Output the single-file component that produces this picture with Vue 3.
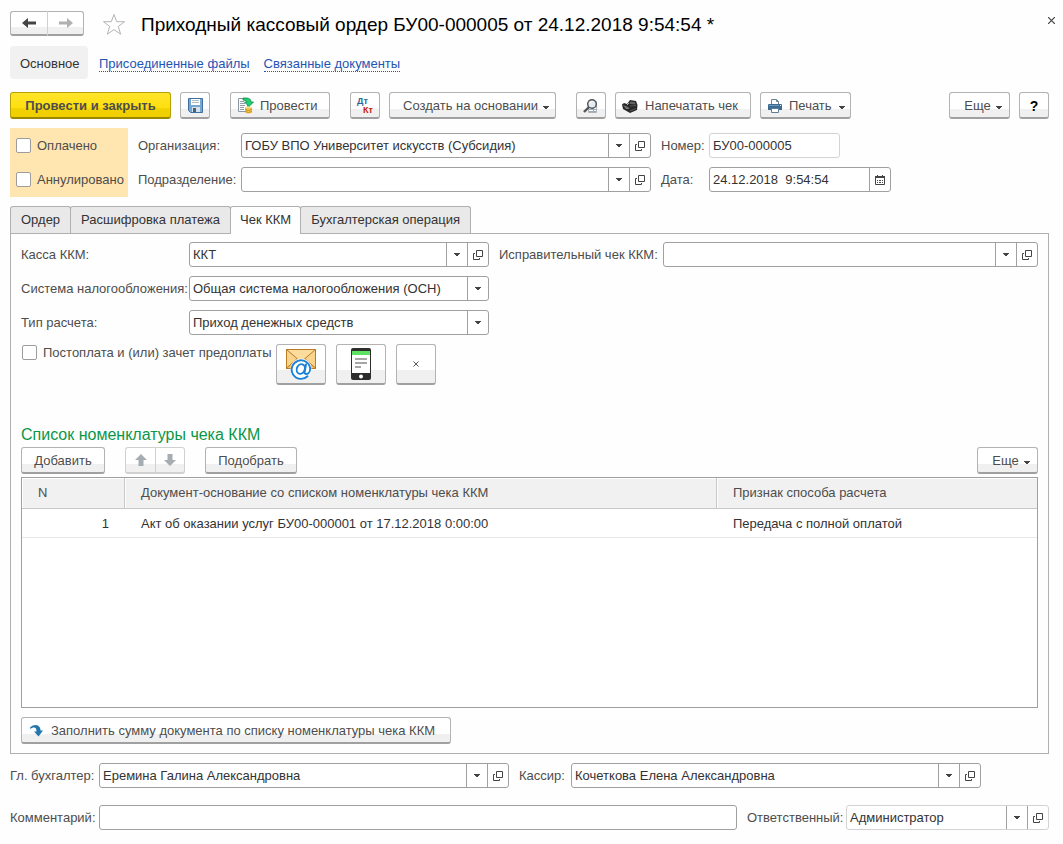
<script setup>
import { ref } from 'vue'

const tabs = ['Ордер', 'Расшифровка платежа', 'Чек ККМ', 'Бухгалтерская операция']
const activeTab = ref('Чек ККМ')

const paid = ref(false)
const cancelled = ref(false)
const postpaid = ref(false)

const organization = ref('ГОБУ ВПО Университет искусств (Субсидия)')
const department = ref('')
const number = ref('БУ00-000005')
const date = ref('24.12.2018  9:54:54')
const cashRegister = ref('ККТ')
const correctionReceipt = ref('')
const taxSystem = ref('Общая система налогообложения (ОСН)')
const paymentType = ref('Приход денежных средств')
const accountant = ref('Еремина Галина Александровна')
const cashier = ref('Кочеткова Елена Александровна')
const comment = ref('')
const responsible = ref('Администратор')

const rows = [
  {
    n: 1,
    document: 'Акт об оказании услуг БУ00-000001 от 17.12.2018 0:00:00',
    method: 'Передача с полной оплатой',
  },
]
</script>

<template>
  <svg class="sprite" width="0" height="0" aria-hidden="true">
    <symbol id="i-caret" viewBox="0 0 6 3"><path d="M0 0h6v1H5v1H4v1H2V2H1V1H0z" fill="#444" /></symbol>
    <symbol id="i-open" viewBox="0 0 10 10">
      <path d="M3.500 .5h6v6h-6z M2 3.500H.5v6h6V8" fill="none" stroke="#444" />
    </symbol>
  </svg>

  <main class="page">
    <header class="header">
      <div class="pair">
        <button class="btn" aria-label="Назад">
          <svg width="14" height="12" viewBox="0 0 14 12"><path d="M0 6l6-5v3.500h8v3H6V11z" fill="#444" /></svg>
        </button>
        <button class="btn" aria-label="Вперед">
          <svg width="14" height="12" viewBox="0 0 14 12"><path d="M14 6L8 1v3.500H0v3h8V11z" fill="#b0b0b0" /></svg>
        </button>
      </div>
      <button class="star" aria-label="Избранное">
        <svg width="24" height="23" viewBox="0 0 24 23">
          <path d="M12 1.500l2.700 7.200h7.800l-6.200 4.700 2.300 7.800L12 16.600l-6.600 4.600 2.300-7.800-6.200-4.700h7.800z" fill="#fff" stroke="#b4b4b4" />
        </svg>
      </button>
      <h1>Приходный кассовый ордер БУ00-000005 от 24.12.2018 9:54:54 *</h1>
      <button class="close" aria-label="Закрыть">
        <svg width="7" height="7" viewBox="0 0 7 7"><path d="M0 0l7 7M7 0L0 7" stroke="#444" stroke-width="1.200" /></svg>
      </button>
    </header>

    <nav class="nav">
      <span class="current">Основное</span>
      <a href="#files">Присоединенные файлы</a>
      <a href="#related">Связанные документы</a>
    </nav>

    <div class="toolbar">
      <div class="group">
        <button class="btn primary">Провести и закрыть</button>
        <button class="btn square" aria-label="Записать">
          <svg width="15" height="15" viewBox="0 0 15 15">
            <path d="M.5 .5h14v14h-12l-2-2z" fill="#78a7d2" stroke="#3f6f9f" />
            <path d="M3 1h9v6H3z" fill="#fff" />
            <path d="M4 2.500h7M4 4.500h7" stroke="#b5bec6" />
            <path d="M4 9h8v5H4z" fill="#d6e1e9" />
            <path d="M5 10h3v4H5z" fill="#42617c" />
          </svg>
        </button>
      </div>
      <button class="btn post">
        <svg width="17" height="17" viewBox="0 0 17 17">
          <path d="M1.500 1.500h9v13h-9z" fill="#fafafa" stroke="#8b98a4" />
          <path d="M3 4.500h4M3 6.500h5M3 8.500h5M3 10.500h4M3 12.500h4" stroke="#93a0ab" />
          <path d="M8 10.500h7v5q-3.500 2-7 0z" fill="#f4c64d" />
          <path d="M8 10.500q3.500 2 7 0M8 12.500q3.500 2 7 0M8 14.500q3.500 2 7 0" fill="none" stroke="#c5901c" />
          <ellipse cx="11.500" cy="10.500" rx="3.500" ry="1" fill="#ffe38c" />
          <path d="M6 1h3q5 0 5 4h2.500L12 9.500 7.500 5H10q0-2-4-2z" fill="#1fd070" stroke="#078b46" stroke-width=".8" />
        </svg>
        Провести
      </button>
      <div class="group">
        <button class="btn square dtkt" aria-label="Движения документа">
          <span class="dt">Дт</span><span class="kt">Кт</span>
        </button>
        <button class="btn create">Создать на основании <svg class="caret"><use href="#i-caret" /></svg></button>
      </div>
      <div class="group">
        <button class="btn square" aria-label="Просмотр">
          <svg width="16" height="16" viewBox="0 0 16 16">
            <path d="M7.500 3.500h6v11h-8v-4" fill="#fff" stroke="#a9b4bd" />
            <path d="M6 11.500h7M6 13.500h7M10.500 9v6" stroke="#9aabb9" />
            <circle cx="9" cy="6" r="4.300" fill="#e4edf3" stroke="#555" stroke-width="1.500" />
            <path d="M7 5.500q.5-2 2.500-2" fill="none" stroke="#fff" />
            <path d="M6 9l-5 5" stroke="#555" stroke-width="2.400" />
          </svg>
        </button>
        <button class="btn cheque">
          <svg width="16" height="13" viewBox="0 0 16 13">
            <path d="M0 4.500L2 3l3 1L8 0l6 1 1.500 4-.5 5-7 3-7-4z" fill="#292929" />
            <path d="M1 5l5 2 1.500 2L4 9z" fill="#777" />
            <path d="M8 1.500l5 .8.5 2.200-6-.8z" fill="#666" />
            <path d="M8 6l6-.5M8 11l6-2.500" stroke="#555" />
            <path d="M5 5l2-2" stroke="#bbb" />
          </svg>
          Напечатать чек
        </button>
        <button class="btn print">
          <svg width="14" height="14" viewBox="0 0 14 14">
            <path d="M3.500 6V.5h5l2 2V6" fill="#fff" stroke="#6b8496" />
            <path d="M8.500 .5v2h2" fill="none" stroke="#6b8496" />
            <path d="M1 5h12q1 0 1 1v5H0V6q0-1 1-1z" fill="#3a6c94" />
            <path d="M1 6.500h10" stroke="#6c98ba" /><path d="M12 6.500h1" stroke="#fff" />
            <path d="M3.500 9.500h7v4h-7z" fill="#fff" stroke="#5f7c91" />
          </svg>
          Печать <svg class="caret"><use href="#i-caret" /></svg>
        </button>
      </div>
      <div class="group end">
        <button class="btn more">Еще <svg class="caret"><use href="#i-caret" /></svg></button>
        <button class="btn square help" aria-label="Справка">?</button>
      </div>
    </div>

    <section class="top-form">
      <div class="flags">
        <label><input v-model="paid" type="checkbox" />Оплачено</label>
        <label><input v-model="cancelled" type="checkbox" />Аннулировано</label>
      </div>
      <div class="top-grid">
        <label for="org">Организация:</label>
        <div class="field">
          <input id="org" v-model="organization" />
          <button aria-label="Выбрать организацию"><svg class="caret"><use href="#i-caret" /></svg></button>
          <button aria-label="Открыть организацию"><svg class="open"><use href="#i-open" /></svg></button>
        </div>
        <label for="num">Номер:</label>
        <div class="field pale number"><input id="num" v-model="number" /></div>

        <label for="dep">Подразделение:</label>
        <div class="field">
          <input id="dep" v-model="department" />
          <button aria-label="Выбрать подразделение"><svg class="caret"><use href="#i-caret" /></svg></button>
          <button aria-label="Открыть подразделение"><svg class="open"><use href="#i-open" /></svg></button>
        </div>
        <label for="date">Дата:</label>
        <div class="field date">
          <input id="date" v-model="date" />
          <button aria-label="Календарь">
            <svg width="10" height="10" viewBox="0 0 10 10">
              <path d="M.5 1.500h9v8h-9z" fill="#fff" stroke="#444" />
              <path d="M0 2h10" stroke="#444" stroke-width="2" />
              <path d="M2.500 0v2M7.500 0v2" stroke="#444" />
              <path d="M2 5.500h1M4 5.500h2M7 5.500h1M2 7.500h1M4 7.500h2M7 7.500h1" stroke="#444" />
            </svg>
          </button>
        </div>
      </div>
    </section>

    <div class="tabs" role="tablist">
      <button
        v-for="tab in tabs"
        :key="tab"
        role="tab"
        :aria-selected="tab === activeTab"
        :class="{ active: tab === activeTab }"
        @click="activeTab = tab"
      >{{ tab }}</button>
    </div>

    <section class="panel">
      <div class="line">
        <label class="lead" for="kkm">Касса ККМ:</label>
        <div class="field medium">
          <input id="kkm" v-model="cashRegister" />
          <button aria-label="Выбрать кассу"><svg class="caret"><use href="#i-caret" /></svg></button>
          <button aria-label="Открыть кассу"><svg class="open"><use href="#i-open" /></svg></button>
        </div>
        <label class="next" for="fix">Исправительный чек ККМ:</label>
        <div class="field grow">
          <input id="fix" v-model="correctionReceipt" />
          <button aria-label="Выбрать чек"><svg class="caret"><use href="#i-caret" /></svg></button>
          <button aria-label="Открыть чек"><svg class="open"><use href="#i-open" /></svg></button>
        </div>
      </div>
      <div class="line">
        <label class="lead" for="tax">Система налогообложения:</label>
        <div class="field medium choice">
          <select id="tax" v-model="taxSystem"><option>Общая система налогообложения (ОСН)</option></select>
          <span><svg class="caret"><use href="#i-caret" /></svg></span>
        </div>
      </div>
      <div class="line">
        <label class="lead" for="type">Тип расчета:</label>
        <div class="field medium choice">
          <select id="type" v-model="paymentType"><option>Приход денежных средств</option></select>
          <span><svg class="caret"><use href="#i-caret" /></svg></span>
        </div>
      </div>

      <div class="send">
        <label><input v-model="postpaid" type="checkbox" />Постоплата и (или) зачет предоплаты</label>
        <button class="btn big" aria-label="Отправить по почте">
          <svg width="32" height="32" viewBox="0 0 32 32">
            <path d="M1 1h30v20H1z" fill="#f9d48d" />
            <path d="M1 21L12 10h8l11 11z" fill="#f3bd65" />
            <path d="M1.500 1.500h29v19h-29z" fill="none" stroke="#b97a24" />
            <path d="M1 20.500L12 11M31 20.500L20 11" stroke="#b97a24" />
            <path d="M1.500 1.500L16 14 30.500 1.500z" fill="#fbdc9d" stroke="#b97a24" />
            <circle cx="16" cy="21" r="10.500" fill="#fff" />
            <g fill="none" stroke="#1a81d8" stroke-width="1.900" stroke-linecap="round">
              <path d="M22.500 28.200A9.300 9.300 0 1 1 25.200 20.500c0 4-2.500 5.500-4.200 5.500-1.600 0-1.500-1.500-1.200-3l1.200-6.500" />
              <ellipse cx="15.800" cy="21" rx="4" ry="5" transform="rotate(20 15.800 21)" />
            </g>
          </svg>
        </button>
        <button class="btn big" aria-label="Отправить SMS">
          <svg width="20" height="32" viewBox="0 0 20 32">
            <rect width="20" height="32" rx="2" fill="#2d2d2d" />
            <path d="M1 3h18v4H1z" fill="#5ee263" />
            <path d="M1 7h18v18H1z" fill="#fff" />
            <path d="M4 11h12M4 15h12M4 19h6" stroke="#a6a6a6" stroke-width="2" />
            <circle cx="10" cy="28.500" r="2" fill="#fff" />
          </svg>
        </button>
        <button class="btn big small" aria-label="Очистить">
          <svg width="6" height="6" viewBox="0 0 6 6"><path d="M.5 .5l5 5M5.500 .5l-5 5" stroke="#555" /></svg>
        </button>
      </div>

      <h2>Список номенклатуры чека ККМ</h2>
      <div class="commands">
        <button class="btn add">Добавить</button>
        <div class="pair dim">
          <button class="btn" aria-label="Вверх" disabled>
            <svg width="12" height="12" viewBox="0 0 12 12"><path d="M6 0l6 6H8.500v6h-5V6H0z" fill="#a5adb2" /></svg>
          </button>
          <button class="btn" aria-label="Вниз" disabled>
            <svg width="12" height="12" viewBox="0 0 12 12"><path d="M6 12l6-6H8.500V0h-5v6H0z" fill="#a5adb2" /></svg>
          </button>
        </div>
        <button class="btn pick">Подобрать</button>
        <button class="btn more end">Еще <svg class="caret"><use href="#i-caret" /></svg></button>
      </div>

      <div class="table-box">
        <table>
          <colgroup><col class="c-n" /><col class="c-doc" /><col /></colgroup>
          <thead>
            <tr>
              <th>N</th>
              <th>Документ-основание со списком номенклатуры чека ККМ</th>
              <th>Признак способа расчета</th>
            </tr>
          </thead>
          <tbody>
            <tr v-for="row in rows" :key="row.n">
              <td class="num">{{ row.n }}</td>
              <td>{{ row.document }}</td>
              <td>{{ row.method }}</td>
            </tr>
          </tbody>
        </table>
      </div>

      <button class="btn fill">
        <svg width="13" height="12" viewBox="0 0 13 12">
          <path d="M0 2.500Q2 0 5 0q5.500 0 5.500 5.500H13L8.500 11.500 4 6.500h2.500Q6.500 2.500 4 2.500 2 2 .5 4z" fill="#2477ad" />
        </svg>
        Заполнить сумму документа по списку номенклатуры чека ККМ
      </button>
    </section>

    <footer class="footer">
      <div class="line">
        <label class="lead" for="acc">Гл. бухгалтер:</label>
        <div class="field wide">
          <input id="acc" v-model="accountant" />
          <button aria-label="Выбрать бухгалтера"><svg class="caret"><use href="#i-caret" /></svg></button>
          <button aria-label="Открыть бухгалтера"><svg class="open"><use href="#i-open" /></svg></button>
        </div>
        <label class="next cashier-label" for="cashier">Кассир:</label>
        <div class="field wide">
          <input id="cashier" v-model="cashier" />
          <button aria-label="Выбрать кассира"><svg class="caret"><use href="#i-caret" /></svg></button>
          <button aria-label="Открыть кассира"><svg class="open"><use href="#i-open" /></svg></button>
        </div>
      </div>
      <div class="line">
        <label class="lead" for="comment">Комментарий:</label>
        <div class="field grow"><input id="comment" v-model="comment" /></div>
        <label class="next resp-label" for="resp">Ответственный:</label>
        <div class="field pale resp">
          <input id="resp" v-model="responsible" />
          <button aria-label="Выбрать ответственного"><svg class="caret"><use href="#i-caret" /></svg></button>
          <button aria-label="Открыть ответственного"><svg class="open"><use href="#i-open" /></svg></button>
        </div>
      </div>
    </footer>
  </main>
</template>

<style>
body {
  background: #fefefe;
}
</style>

<style scoped>
.sprite {
  position: absolute;
}
.page {
  box-sizing: border-box;
  display: flex;
  flex-direction: column;
  min-height: 100vh;
  padding: 11px 14px 14px 10px;
  color: #4d4d4d;
  font: 13px/16px "Liberation Sans", Arial, sans-serif;
}
.page * {
  box-sizing: border-box;
}
button,
input,
select {
  margin: 0;
  font: inherit;
  color: inherit;
}
svg {
  display: block;
  flex: none;
}
.caret {
  width: 6px;
  height: 3px;
}
.open {
  width: 10px;
  height: 10px;
}

.btn {
  display: flex;
  align-items: center;
  justify-content: center;
  height: 27px;
  padding: 2px 10px 0;
  border: 1px solid #b3b3b3;
  border-bottom: 2px solid #a0a0a0;
  border-radius: 3px;
  background: linear-gradient(#fff 66%, #f0f0f0 66%);
  white-space: nowrap;
}
.btn .caret {
  margin-top: 2px;
}
.pair {
  display: flex;
}
.pair .btn {
  width: 37px;
  height: 25px;
  padding: 0;
}
.pair .btn:first-child {
  border-right: 0;
  border-radius: 3px 0 0 3px;
}
.pair .btn:last-child {
  border-left-color: #d0d0d0;
  border-radius: 0 3px 3px 0;
}
.pair.dim .btn {
  width: 30px;
  height: 27px;
  border-color: #d0d0d0;
}

.header {
  display: flex;
  align-items: flex-start;
  height: 26px;
}
.star,
.close {
  padding: 0;
  border: 0;
  background: none;
}
.star {
  margin: 2px 0 0 18px;
}
.close {
  margin: 6px -6px 0 auto;
}
h1 {
  margin: 2px 0 0 15px;
  color: #000;
  font-size: 19px;
  line-height: 24px;
  font-weight: 400;
}

.nav {
  display: flex;
  align-items: center;
  gap: 14px;
  margin-top: 9px;
}
.current {
  width: 78px;
  margin-right: -3px;
  padding: 10px 0 7px 10px;
  border-radius: 4px;
  background: #f1f1f1;
  color: #333;
}
.nav a {
  margin-top: 3px;
  color: #1f55b5;
  line-height: 14px;
  text-decoration: none;
  border-bottom: 1px dotted #1f55b5;
}

.toolbar {
  display: flex;
  gap: 20px;
  margin-top: 13px;
}
.group {
  display: flex;
  gap: 9px;
}
.end {
  margin-left: auto;
}
.primary {
  min-width: 161px;
  border-color: #b8a000;
  border-bottom-color: #9c8800;
  background: linear-gradient(#ffe52b, #ffdf10 60%, #f2d100 66%, #efcf00);
  font-weight: 700;
}
.square {
  width: 30px;
  padding: 1px 0 0;
}
.post {
  justify-content: flex-start;
  gap: 6px;
  width: 100px;
  padding: 1px 0 0 6px;
}
.dtkt {
  flex-direction: column;
  font-size: 9px;
  line-height: 9px;
  font-weight: 700;
}
.dt {
  margin-right: 5px;
  color: #2b6699;
}
.kt {
  margin-left: 6px;
  color: #c3200e;
}
.create,
.more {
  gap: 5px;
}
.create {
  width: 167px;
  padding: 2px 5px 0 12px;
}
.cheque {
  justify-content: flex-start;
  gap: 7px;
  width: 136px;
  padding: 2px 0 0 6px;
}
.print {
  justify-content: flex-start;
  gap: 7px;
  width: 91px;
  padding: 2px 5px 0 7px;
}
.print .caret {
  margin-left: auto;
}
.more {
  min-width: 61px;
  padding: 2px 5px 0 12px;
}
.help {
  color: #000;
  font-size: 14px;
  font-weight: 700;
}

input[type='checkbox'] {
  flex: none;
  appearance: none;
  width: 15px;
  height: 15px;
  border: 1px solid #9c9c9c;
  border-radius: 2px;
  background: #fff;
}
input[type='checkbox']:checked {
  background: #555;
}

.top-form {
  display: flex;
  gap: 10px;
  margin-top: 9px;
}
.flags {
  display: flex;
  flex-direction: column;
  gap: 18px;
  width: 118px;
  height: 69px;
  padding: 10px 0 0 6px;
  background: #ffe5b0;
}
.flags label,
.send label {
  display: flex;
  gap: 6px;
  white-space: nowrap;
}
.top-grid {
  flex: 1;
  display: grid;
  grid-template-columns: 103px minmax(0, 410px) 58px 182px;
  grid-auto-rows: 25px;
  row-gap: 9px;
  align-items: center;
  padding-top: 5px;
}
.top-grid label:nth-of-type(even) {
  padding-left: 10px;
}

.field {
  display: flex;
  height: 25px;
  min-width: 0;
  border: 1px solid #a0a0a0;
  border-radius: 3px;
  background: #fff;
  color: #333;
}
.field.pale {
  border-color: #d3d3d3;
}
.field input {
  flex: 1;
  min-width: 0;
  padding: 0 3px;
  border: 0;
  background: none;
  outline: none;
  white-space: pre;
}
.field button {
  display: flex;
  flex: none;
  align-items: center;
  justify-content: center;
  width: 21px;
  padding: 0 1px 0 0;
  border: 0;
  border-left: 1px solid #a0a0a0;
  background: none;
}
.choice {
  display: grid;
}
.choice select {
  grid-area: 1 / 1;
  appearance: none;
  min-width: 0;
  padding: 0 24px 0 3px;
  border: 0;
  background: none;
  outline: none;
}
.choice span {
  grid-area: 1 / 1;
  display: flex;
  align-items: center;
  justify-content: center;
  justify-self: end;
  width: 21px;
  padding-right: 1px;
  border-left: 1px solid #a0a0a0;
  pointer-events: none;
}
.number {
  width: 131px;
}
.medium {
  width: 300px;
}
.wide {
  width: 410px;
}
.resp {
  width: 203px;
}
.grow {
  flex: 1;
}

.tabs {
  display: flex;
  margin-top: 9px;
}
.tabs button {
  height: 27px;
  margin-right: -1px;
  padding: 0 10px;
  border: 1px solid #b0b0b0;
  border-bottom: 0;
  border-radius: 3px 3px 0 0;
  background: #e9e9e9;
  color: #333;
}
.tabs .active {
  position: relative;
  height: 28px;
  margin-bottom: -1px;
  padding: 0 9px 1px;
  background: #fefefe;
}

.panel {
  flex: 1;
  display: flex;
  flex-direction: column;
  padding: 8px 10px 9px;
  border: 1px solid #b0b0b0;
}
.line {
  display: flex;
  align-items: center;
}
.panel .line {
  margin-bottom: 9px;
}
.lead {
  flex: none;
  width: 168px;
}
.next {
  flex: none;
  margin-left: 10px;
  padding-right: 5px;
  white-space: nowrap;
}
.send {
  display: flex;
  align-items: flex-start;
  gap: 10px;
}
.send label {
  width: 245px;
  padding: 1px 0 0 1px;
}
.big {
  width: 50px;
  height: 41px;
  padding: 0;
}
.small {
  width: 40px;
}
h2 {
  margin: 40px 0 3px;
  color: #0a9648;
  font-size: 16px;
  line-height: 19px;
  font-weight: 400;
}
.commands {
  display: flex;
  gap: 20px;
}
.add {
  min-width: 84px;
}
.pick {
  min-width: 92px;
}

.table-box {
  flex: 1;
  margin: 3px 0 9px;
  border: 1px solid #a0a0a0;
  background: #fff;
}
table {
  width: 100%;
  table-layout: fixed;
  border-collapse: separate;
  border-spacing: 0;
}
.c-n {
  width: 103px;
}
.c-doc {
  width: 592px;
}
th {
  height: 31px;
  padding: 0 16px;
  border-bottom: 1px solid #c8c8c8;
  border-right: 1px solid #c8c8c8;
  background: #f1f1f1;
  box-shadow: inset 1px 1px #fff;
  font-weight: 400;
  text-align: left;
}
th:last-child {
  border-right: 0;
}
td {
  height: 29px;
  padding: 2px 16px 0;
  border-bottom: 1px solid #e8e8e8;
  color: #333;
}
.num {
  text-align: right;
}
.fill {
  align-self: flex-start;
  justify-content: flex-start;
  gap: 8px;
  min-width: 430px;
  padding-left: 8px;
}

.footer {
  display: flex;
  flex-direction: column;
  gap: 17px;
  margin-top: 9px;
}
.footer .lead {
  width: 89px;
}
.cashier-label {
  width: 52px;
  padding: 0;
}
.resp-label {
  width: 99px;
  padding: 0;
}
</style>
